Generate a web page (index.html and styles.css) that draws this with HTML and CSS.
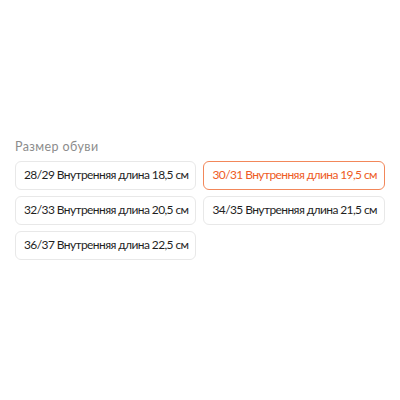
FILE: index.html
```html
<!DOCTYPE html>
<html lang="ru">
<head>
  <meta charset="UTF-8">
  <title>Размер обуви</title>
  <link rel="stylesheet" href="styles.css">
</head>
<body>
  <div class="sku">
    <div class="sku-title">Размер обуви</div>
    <div class="sku-list">
      <div class="sku-item">28/29 Внутренняя длина 18,5 см</div>
      <div class="sku-item selected">30/31 Внутренняя длина 19,5 см</div>
      <div class="sku-item">32/33 Внутренняя длина 20,5 см</div>
      <div class="sku-item">34/35 Внутренняя длина 21,5 см</div>
      <div class="sku-item">36/37 Внутренняя длина 22,5 см</div>
    </div>
  </div>
</body>
</html>
```

FILE: styles.css
```css
body {
  margin: 0;
  background: #fff;
  font-family: "Lato", "Noto Sans", sans-serif;
  color: #1f1f1f;
}
.sku {
  padding: 139px 15px 0 15px;
}
.sku-title {
  font-size: 12.5px;
  letter-spacing: 0.4px;
  color: #8c8c8c;
  line-height: 16px;
  margin-bottom: 6px;
}
.sku-list {
  display: flex;
  flex-wrap: wrap;
  gap: 6px 7px;
  width: 372px;
}
.sku-item {
  box-sizing: border-box;
  height: 29px;
  line-height: 26px;
  padding: 0 7px 0 8px;
  font-size: 12px;
  letter-spacing: -0.6px;
  border: 1px solid #e8e8e8;
  border-radius: 6px;
  white-space: nowrap;
}
.sku-item.selected {
  border-color: #f2875a;
  color: #ee5b25;
}
```
